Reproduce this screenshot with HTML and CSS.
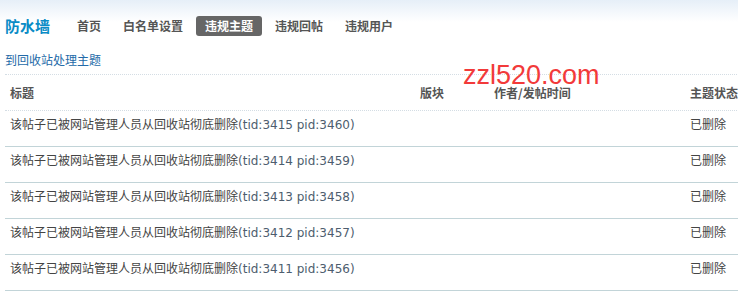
FILE: index.html
```html
<!DOCTYPE html>
<html lang="zh-CN">
<head>
<meta charset="utf-8">
<title>防水墙</title>
<link rel="stylesheet" href="styles.css">
</head>
<body>
<div class="page">
  <div class="topbar">
    <span class="logo">防水墙</span>
    <nav class="nav">
      <a class="nav-item">首页</a>
      <a class="nav-item">白名单设置</a>
      <a class="nav-item active">违规主题</a>
      <a class="nav-item">违规回帖</a>
      <a class="nav-item">违规用户</a>
    </nav>
  </div>
  <div class="linkrow"><a class="link">到回收站处理主题</a></div>
  <div class="table">
    <div class="row head">
      <div class="cell c1">标题</div>
      <div class="cell c2">版块</div>
      <div class="cell c3">作者/发帖时间</div>
      <div class="cell c4">主题状态</div>
    </div>
    <div class="row">
      <div class="cell c1">该帖子已被网站管理人员从回收站彻底删除<span class="num">(tid:3415 pid:3460)</span></div>
      <div class="cell c2"></div><div class="cell c3"></div>
      <div class="cell c4">已删除</div>
    </div>
    <div class="row">
      <div class="cell c1">该帖子已被网站管理人员从回收站彻底删除<span class="num">(tid:3414 pid:3459)</span></div>
      <div class="cell c2"></div><div class="cell c3"></div>
      <div class="cell c4">已删除</div>
    </div>
    <div class="row">
      <div class="cell c1">该帖子已被网站管理人员从回收站彻底删除<span class="num">(tid:3413 pid:3458)</span></div>
      <div class="cell c2"></div><div class="cell c3"></div>
      <div class="cell c4">已删除</div>
    </div>
    <div class="row">
      <div class="cell c1">该帖子已被网站管理人员从回收站彻底删除<span class="num">(tid:3412 pid:3457)</span></div>
      <div class="cell c2"></div><div class="cell c3"></div>
      <div class="cell c4">已删除</div>
    </div>
    <div class="row">
      <div class="cell c1">该帖子已被网站管理人员从回收站彻底删除<span class="num">(tid:3411 pid:3456)</span></div>
      <div class="cell c2"></div><div class="cell c3"></div>
      <div class="cell c4">已删除</div>
    </div>
  </div>
  <div class="watermark">zzl520.com</div>
</div>
</body>
</html>
```
FILE: styles.css
```css
html, body {
  margin: 0;
  padding: 0;
}
body {
  background: linear-gradient(to bottom, #e6eff8 0px, #ffffff 22px) no-repeat;
  background-color: #fff;
  font-family: "Noto Sans CJK SC", "DejaVu Sans", sans-serif;
  font-size: 12px;
  color: #444;
  overflow: hidden;
  width: 738px;
  height: 293px;
}
.page {
  position: relative;
  padding: 16px 0 0 5px;
}
.topbar {
  display: flex;
  align-items: center;
  height: 20px;
}
.logo {
  font-size: 15px;
  font-weight: bold;
  color: #0a8cc6;
  margin-right: 18px;
  line-height: 20px;
}
.nav {
  display: flex;
  align-items: center;
  gap: 4px;
}
.nav-item {
  display: block;
  padding: 0 9px;
  height: 20px;
  line-height: 20px;
  font-weight: bold;
  color: #555;
  border-radius: 3px;
}
.nav-item.active {
  background: #666;
  color: #fff;
}
.linkrow {
  margin-top: 14px;
  height: 24px;
  line-height: 20px;
}
.link {
  color: #236aa8;
}
.table {
  width: 800px;
  border-top: 1px dotted #d4dde4;
}
.row {
  display: grid;
  grid-template-columns: 410px 74px 196px 120px;
  height: 35px;
  align-items: start;
  border-bottom: 1px solid #c2d4d8;
}
.row .cell {
  padding-top: 5px;
}
.row.head {
  align-items: center;
  border-bottom: 1px dotted #d4dde4;
  font-weight: bold;
  color: #555;
}
.row.head .cell {
  padding-top: 0;
}
.cell {
  padding-left: 5px;
  white-space: nowrap;
  line-height: 16px;
}
.num {
  font-family: "DejaVu Sans", sans-serif;
  font-size: 12px;
  color: #4d5d6e;
}
.watermark {
  position: absolute;
  left: 463px;
  top: 62px;
  font-family: "Liberation Sans", Arial, sans-serif;
  font-size: 27px;
  line-height: 1;
  color: #f23a3a;
}
```
